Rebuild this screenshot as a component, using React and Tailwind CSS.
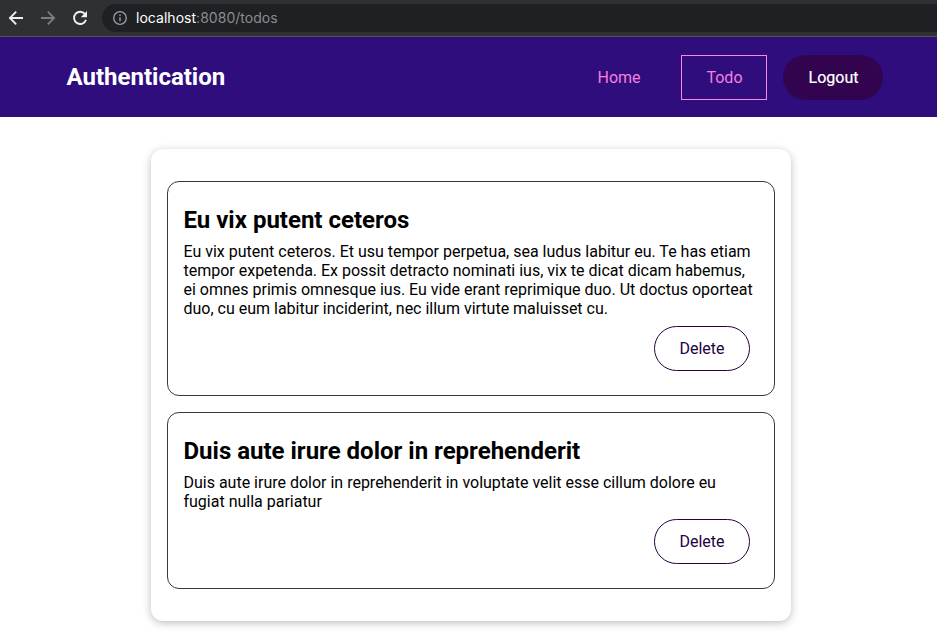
const todos = [
  {
    title: "Eu vix putent ceteros",
    lines: [
      "Eu vix putent ceteros. Et usu tempor perpetua, sea ludus labitur eu. Te has etiam",
      "tempor expetenda. Ex possit detracto nominati ius, vix te dicat dicam habemus,",
      "ei omnes primis omnesque ius. Eu vide erant reprimique duo. Ut doctus oporteat",
      "duo, cu eum labitur inciderint, nec illum virtute maluisset cu.",
    ],
  },
  {
    title: "Duis aute irure dolor in reprehenderit",
    lines: [
      "Duis aute irure dolor in reprehenderit in voluptate velit esse cillum dolore eu",
      "fugiat nulla pariatur",
    ],
  },
];

function BrowserBar() {
  return (
    <div className="flex h-[37px] items-start border-b border-[#525355] bg-[#2f3034]">
      <div className="flex h-9 w-[102px] shrink-0 items-center">
        <svg className="ml-[8px] h-4 w-4" viewBox="0 0 16 16" fill="none" stroke="#f1f1f2" strokeWidth="1.8">
          <path d="M15 8H2.5M8.2 1.7L1.9 8l6.3 6.3" />
        </svg>
        <svg className="ml-[16px] h-4 w-4" viewBox="0 0 16 16" fill="none" stroke="#7d7e81" strokeWidth="1.8">
          <path d="M1 8h12.5M7.8 1.7L14.1 8l-6.3 6.3" />
        </svg>
        <svg className="ml-[16px] h-4 w-4" viewBox="0 0 16 16">
          <path d="M13.2 4.4A6.1 6.1 0 1 0 14 9.7" fill="none" stroke="#f1f1f2" strokeWidth="1.9" />
          <path d="M15 1v6.2H8.8z" fill="#f1f1f2" />
        </svg>
      </div>
      <div className="mt-1 flex h-7 flex-1 items-center rounded-l-full bg-[#1e2023] pl-[11px]">
        <svg className="h-[14px] w-[14px]" viewBox="0 0 14 14" fill="none" stroke="#9aa0a6">
          <circle cx="7" cy="7" r="6.3" strokeWidth="1.3" />
          <path d="M7 6.2v4M7 3.6v1.4" strokeWidth="1.4" />
        </svg>
        <div className="ml-[9px] font-[Inter,sans-serif] text-[14px] leading-5 tracking-[0.03px] text-[#8b8d90]">
          <span className="text-white">localhost</span>:8080/todos
        </div>
      </div>
    </div>
  );
}

function TodoItem({ title, lines }) {
  return (
    <li className="rounded-xl border border-[#38383a] pt-6 pr-6 pb-6 pl-[15.5px]">
      <h2 className="text-2xl leading-7 font-bold">{title}</h2>
      <p className="mt-2 text-base leading-[19px] tracking-[-0.005px] whitespace-nowrap">
        {lines.map((line) => (
          <span key={line} className="block">{line}</span>
        ))}
      </p>
      <div className="mt-2 flex justify-end">
        <button className="h-[45px] w-24 rounded-full border border-[#270041] text-base text-[#270041]">Delete</button>
      </div>
    </li>
  );
}

export default function App() {
  return (
    <div className="h-[641px] w-[937px] overflow-hidden bg-white font-[Roboto,sans-serif] text-black">
      <BrowserBar />
      <header className="flex h-20 items-center justify-between bg-[#2f0d7d] pr-[54px] pl-[66.5px]">
        <h1 className="text-2xl leading-7 font-bold text-white">Authentication</h1>
        <nav className="flex items-center gap-4 text-base leading-[19px]">
          <a className="flex h-[45px] w-[92px] items-center justify-center pt-px text-[#f67fe0]">Home</a>
          <a className="flex h-[45px] w-[86px] items-center justify-center border border-[#fa88e2] pt-px pl-px text-[#f67fe0]">Todo</a>
          <button className="h-[45px] w-[100px] rounded-full bg-[#320450] pt-px pl-px text-white [-webkit-text-stroke:0.2px_white]">Logout</button>
        </nav>
      </header>
      <main className="mt-8 ml-[151px] w-[640px] rounded-xl px-4 py-8 shadow-[0_2px_8px_rgba(0,0,0,0.26)]">
        <ul className="flex flex-col gap-4">
          {todos.map((todo) => (
            <TodoItem key={todo.title} {...todo} />
          ))}
        </ul>
      </main>
    </div>
  );
}
